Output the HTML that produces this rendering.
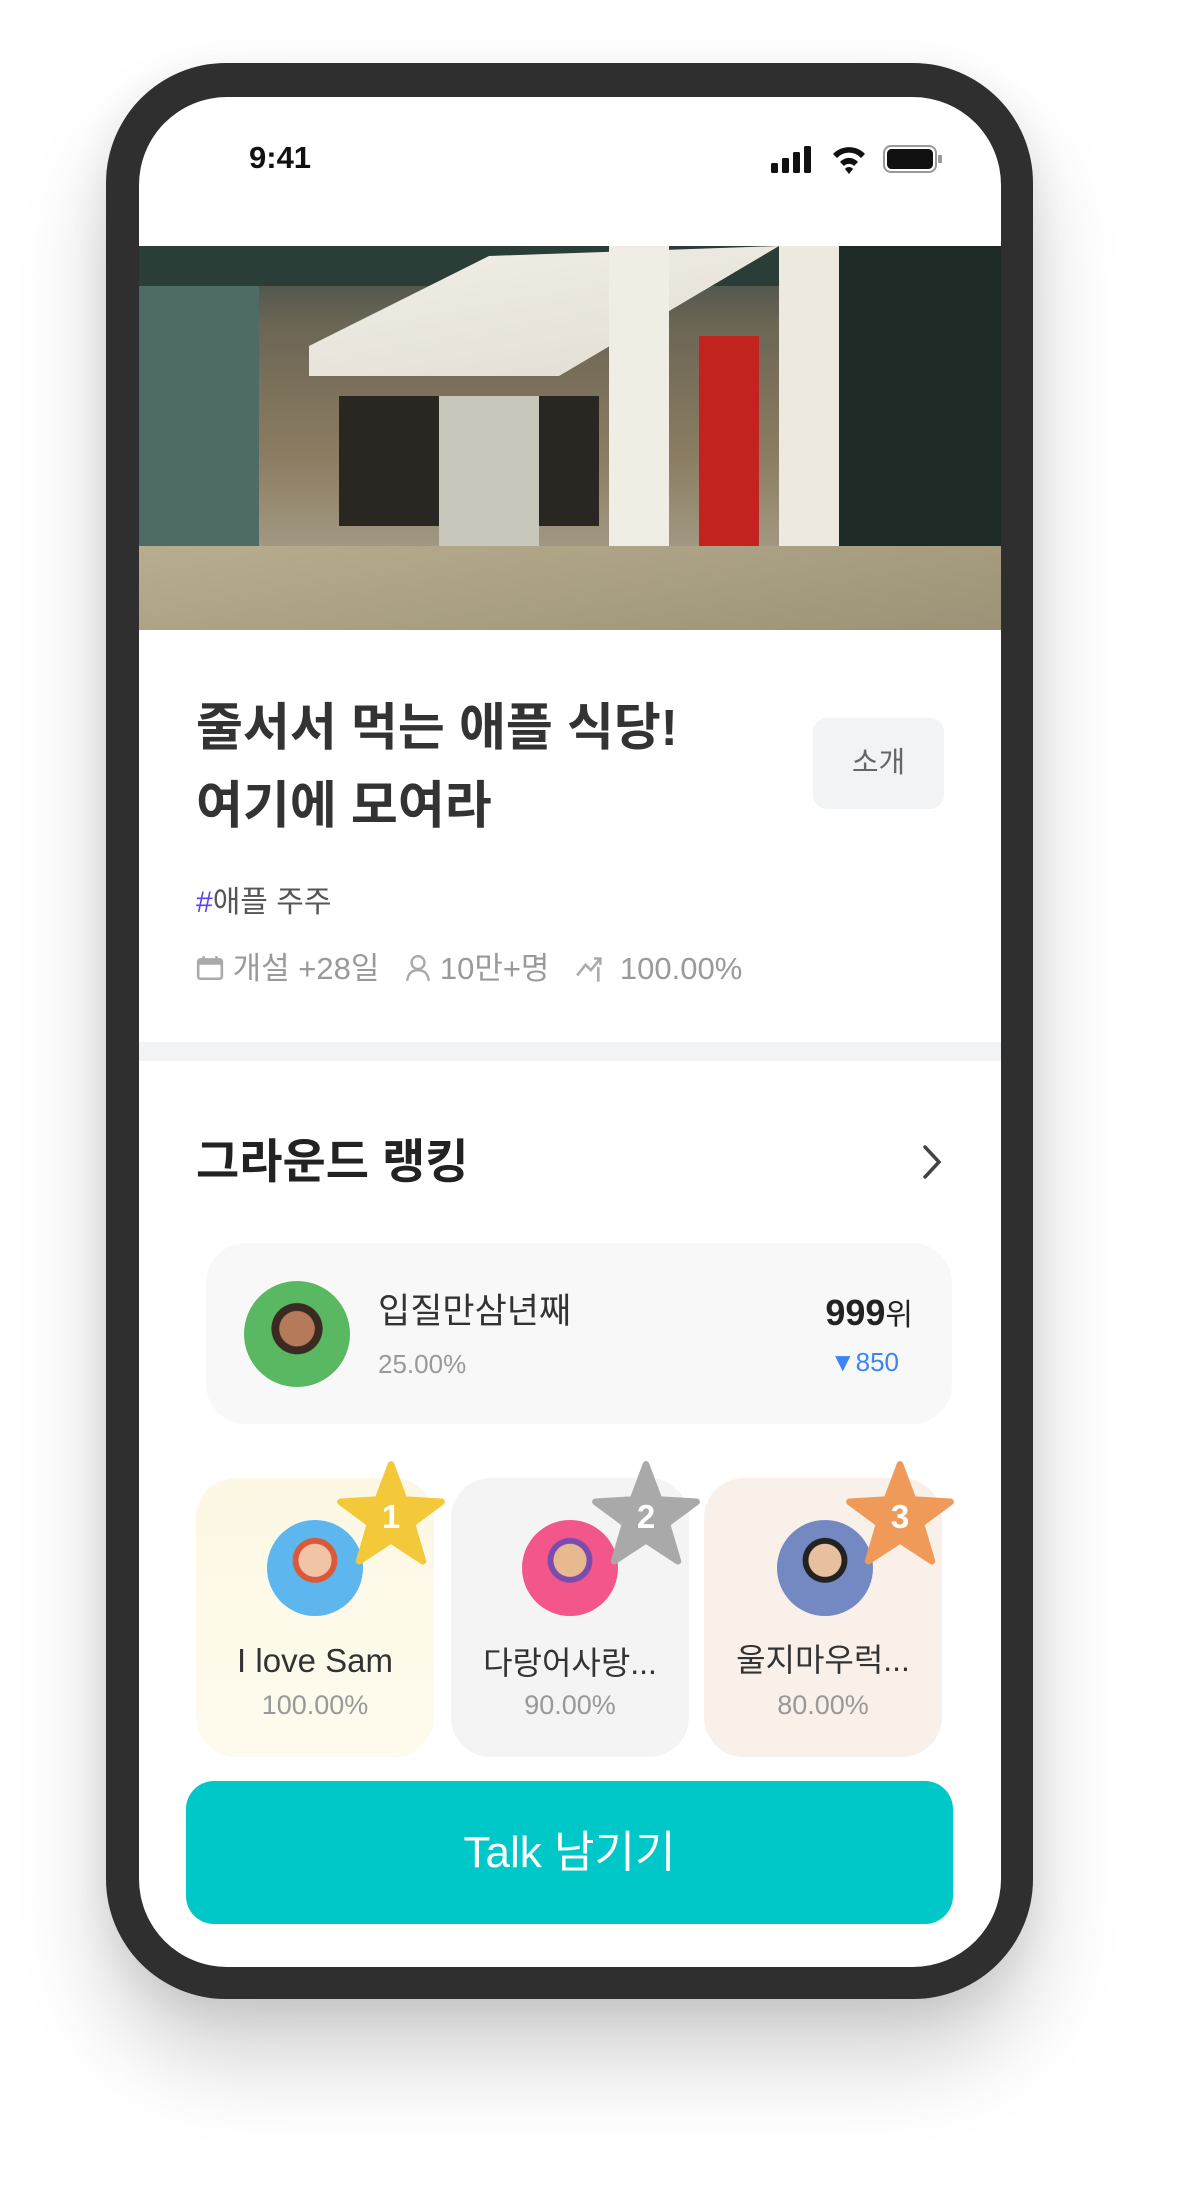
<!DOCTYPE html>
<html><head><meta charset="utf-8"><style>
*{margin:0;padding:0;box-sizing:border-box}
body{width:1184px;height:2188px;background:#fff;position:relative;overflow:hidden;font-family:"Liberation Sans","Noto Sans CJK KR",sans-serif;line-height:1}
.phone{position:absolute;left:106px;top:63px;width:927px;height:1936px;background:#2f2f2f;border-radius:120px;box-shadow:0 60px 90px rgba(0,0,0,.18),0 10px 40px rgba(0,0,0,.08)}
.screen{position:absolute;left:33px;top:34px;width:862px;height:1870px;background:#fff;border-radius:88px;overflow:hidden}
.abs{position:absolute;white-space:nowrap}
.photo{left:0;top:149px;width:862px;height:384px;background:linear-gradient(180deg,#3b4a44 0%,#6b6555 20%,#8c7d62 55%,#a39a84 80%,#8f8b7c 100%);overflow:hidden}
</style></head><body>
<div class="phone"><div class="screen">
 <div class="abs" style="left:110px;top:45px;font-size:31px;font-weight:bold;color:#111">9:41</div>
 <svg class="abs" style="left:632px;top:46px" width="172" height="32" viewBox="0 0 172 32">
  <rect x="0" y="20" width="7" height="10" rx="1.5" fill="#111"/><rect x="11" y="15" width="7" height="15" rx="1.5" fill="#111"/><rect x="22" y="9" width="7" height="21" rx="1.5" fill="#111"/><rect x="33" y="3" width="7" height="27" rx="1.5" fill="#111"/>
  <path d="M62 11 A22 22 0 0 1 94 11 L90 15 A16 16 0 0 0 66 15Z M69 19 A12 12 0 0 1 87 19 L83 23 A7 7 0 0 0 73 23Z M78 31 L74 26 A5 5 0 0 1 82 26Z" fill="#111"/>
  <rect x="113" y="3" width="52" height="26" rx="7" fill="none" stroke="#999" stroke-width="2"/><rect x="116" y="6" width="46" height="20" rx="4.5" fill="#111"/><rect x="167" y="12" width="4" height="8" rx="1" fill="#999"/>
 </svg>
 <div class="abs photo">
  <div class="abs" style="left:0;top:0;width:862px;height:40px;background:#2b3d37"></div>
  <div class="abs" style="left:170px;top:0;width:470px;height:130px;background:linear-gradient(170deg,#f1efe8,#e2ddd2);clip-path:polygon(0 130px,0 100px,180px 10px,470px 0,250px 130px)"></div>
  <div class="abs" style="left:200px;top:150px;width:260px;height:130px;background:#2a2722"></div>
  <div class="abs" style="left:300px;top:150px;width:100px;height:180px;background:#c9c6bc"></div>
  <div class="abs" style="left:470px;top:0;width:60px;height:360px;background:#f0ede4"></div>
  <div class="abs" style="left:560px;top:90px;width:60px;height:250px;background:#c3231f"></div>
  <div class="abs" style="left:700px;top:0;width:162px;height:360px;background:#1d2a26"></div>
  <div class="abs" style="left:700px;top:300px;width:162px;height:84px;background:#c8221d"></div>
  <div class="abs" style="left:640px;top:0;width:60px;height:330px;background:#ede9df"></div>
  <div class="abs" style="left:0;top:300px;width:862px;height:84px;background:linear-gradient(170deg,#b8ad8e,#9c9277)"></div>
  <div class="abs" style="left:0;top:40px;width:120px;height:260px;background:#4e6b66"></div>
 </div>
 <div class="abs" style="left:57px;top:592px;font-size:51px;font-weight:bold;color:#333;line-height:78px">줄서서 먹는 애플 식당!<br>여기에 모여라</div>
 <div class="abs" style="left:674px;top:621px;width:131px;height:91px;background:#f2f3f5;border-radius:14px;font-size:29px;color:#666;text-align:center;line-height:91px">소개</div>
 <div class="abs" style="left:57px;top:791px;font-size:30px;color:#555"><span style="color:#5b45f2">#</span>애플 주주</div>
 <div class="abs" style="left:57px;top:856px;font-size:31px;color:#9a9a9a">
  <svg width="28" height="28" viewBox="0 0 26 26" style="vertical-align:-3px"><rect x="2" y="5" width="22" height="18" rx="2" fill="none" stroke="#aaa" stroke-width="2.4"/><rect x="2" y="5" width="22" height="5" fill="#aaa"/><line x1="7" y1="2" x2="7" y2="6" stroke="#aaa" stroke-width="2.4"/><line x1="19" y1="2" x2="19" y2="6" stroke="#aaa" stroke-width="2.4"/></svg> 개설 +28일&nbsp;&nbsp;
  <svg width="26" height="28" viewBox="0 0 24 26" style="vertical-align:-3px"><circle cx="12" cy="8" r="6" fill="none" stroke="#aaa" stroke-width="2.2"/><path d="M2 25 Q3 15 12 15 Q21 15 22 25" fill="none" stroke="#aaa" stroke-width="2.2"/></svg> 10만+명&nbsp;&nbsp;
  <svg width="36" height="28" viewBox="0 0 34 26" style="vertical-align:-3px"><path d="M2 20 L10 10 L15 15 L24 4 M18 4 L24 4 L24 10 M22 12 L22 26" fill="none" stroke="#aaa" stroke-width="2.4"/></svg> 100.00%
 </div>
 <div class="abs" style="left:0;top:945px;width:862px;height:19px;background:#f2f3f5"></div>
 <div class="abs" style="left:57px;top:1041px;font-size:47px;font-weight:bold;color:#222">그라운드 랭킹</div>
 <svg class="abs" style="left:781px;top:1046px" width="24" height="38" viewBox="0 0 24 38"><path d="M5 4 L19 19 L5 34" fill="none" stroke="#444" stroke-width="3.5" stroke-linecap="round"/></svg>
 <div class="abs" style="left:67px;top:1146px;width:746px;height:181px;background:#f8f8f8;border-radius:40px"></div>
 <div class="abs" style="left:105px;top:1184px;width:106px;height:106px;border-radius:50%;background:radial-gradient(circle at 50% 45%,#b57a5a 0 22%,#3b2a22 23% 32%,#5bb862 33%)"></div>
 <div class="abs" style="left:239px;top:1197px;font-size:35px;color:#333">입질만삼년째</div>
 <div class="abs" style="left:239px;top:1254px;font-size:26px;color:#999">25.00%</div>
 <div class="abs" style="left:600px;top:1198px;width:174px;text-align:right;font-size:36px;font-weight:bold;color:#222">999<span style="font-size:30px;font-weight:normal">위</span></div>
 <div class="abs" style="left:600px;top:1252px;width:160px;text-align:right;font-size:26px;color:#3d84f5">▼850</div>

 <div class="abs" style="left:57px;top:1381px;width:238px;height:279px;border-radius:40px;background:linear-gradient(#fdf8e4,#fefbee)"></div>
 <div class="abs" style="left:312px;top:1381px;width:238px;height:279px;border-radius:40px;background:#f4f4f4"></div>
 <div class="abs" style="left:565px;top:1381px;width:238px;height:279px;border-radius:40px;background:#f9f0ea"></div>
 <div class="abs" style="left:128px;top:1423px;width:96px;height:96px;border-radius:50%;background:radial-gradient(circle at 50% 42%,#f1c4a8 0 22%,#d85a3a 23% 30%,#5eb6ee 31%)"></div>
 <div class="abs" style="left:383px;top:1423px;width:96px;height:96px;border-radius:50%;background:radial-gradient(circle at 50% 42%,#e8b98f 0 22%,#7b4bb0 23% 30%,#f2568a 31%)"></div>
 <div class="abs" style="left:638px;top:1423px;width:96px;height:96px;border-radius:50%;background:radial-gradient(circle at 50% 42%,#e8c0a0 0 22%,#222 23% 30%,#7489c2 31%)"></div>
 <svg class="abs" style="left:197px;top:1363px" width="110" height="110" viewBox="0 0 100 100"><polygon points="50,4 62,36 96,38 69,58 79,92 50,73 21,92 31,58 4,38 38,36" fill="#f3c93a" stroke="#f3c93a" stroke-width="6" stroke-linejoin="round"/><text x="50" y="62" font-size="30" font-weight="bold" fill="#fff" text-anchor="middle" font-family="Liberation Sans">1</text></svg>
 <svg class="abs" style="left:452px;top:1363px" width="110" height="110" viewBox="0 0 100 100"><polygon points="50,4 62,36 96,38 69,58 79,92 50,73 21,92 31,58 4,38 38,36" fill="#a9a9a9" stroke="#a9a9a9" stroke-width="6" stroke-linejoin="round"/><text x="50" y="62" font-size="30" font-weight="bold" fill="#fff" text-anchor="middle" font-family="Liberation Sans">2</text></svg>
 <svg class="abs" style="left:706px;top:1363px" width="110" height="110" viewBox="0 0 100 100"><polygon points="50,4 62,36 96,38 69,58 79,92 50,73 21,92 31,58 4,38 38,36" fill="#f09a5a" stroke="#f09a5a" stroke-width="6" stroke-linejoin="round"/><text x="50" y="62" font-size="30" font-weight="bold" fill="#fff" text-anchor="middle" font-family="Liberation Sans">3</text></svg>
 <div class="abs" style="left:57px;top:1547px;width:238px;text-align:center;font-size:33px;color:#333">I love Sam</div>
 <div class="abs" style="left:312px;top:1550px;width:238px;text-align:center;font-size:32px;color:#333">다랑어사랑...</div>
 <div class="abs" style="left:565px;top:1547px;width:238px;text-align:center;font-size:32px;color:#333">울지마우럭...</div>
 <div class="abs" style="left:57px;top:1595px;width:238px;text-align:center;font-size:27px;color:#999">100.00%</div>
 <div class="abs" style="left:312px;top:1595px;width:238px;text-align:center;font-size:27px;color:#999">90.00%</div>
 <div class="abs" style="left:565px;top:1595px;width:238px;text-align:center;font-size:27px;color:#999">80.00%</div>
 <div class="abs" style="left:47px;top:1684px;width:767px;height:143px;border-radius:28px;background:#00c8c8;color:#fff;font-size:44px;text-align:center;line-height:143px">Talk 남기기</div>
</div></div>
</body></html>
